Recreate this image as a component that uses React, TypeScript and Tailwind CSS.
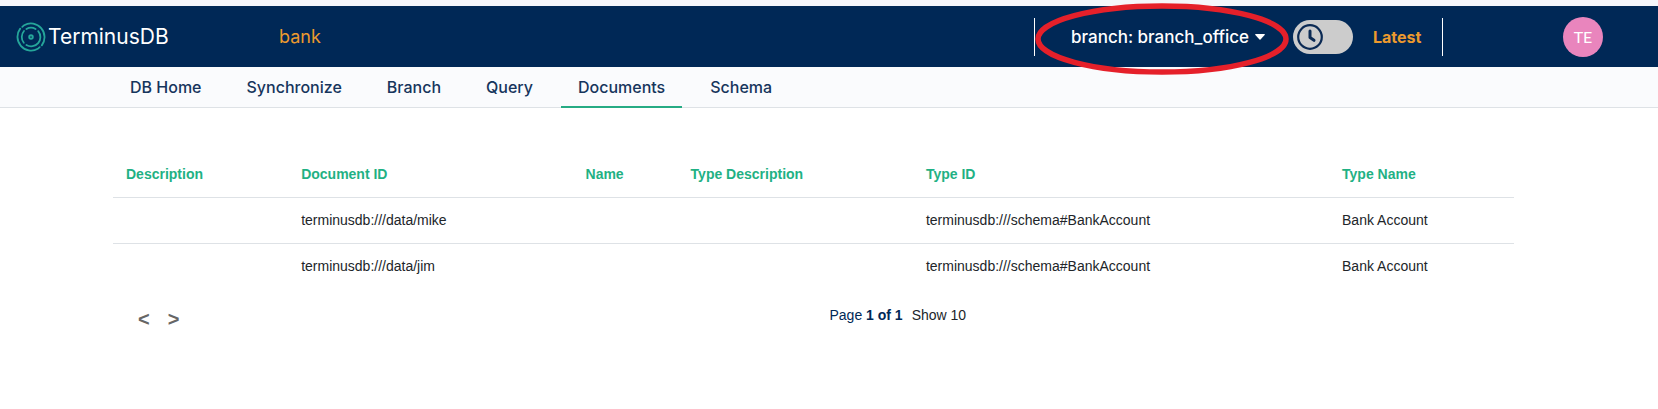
import React from "react";

const tabs = ["DB Home", "Synchronize", "Branch", "Query", "Documents", "Schema"];

const columns = [
  { label: "Description", width: "w-[12.5%]" },
  { label: "Document ID", width: "w-[20.3%]" },
  { label: "Name", width: "w-[7.5%]" },
  { label: "Type Description", width: "w-[16.8%]" },
  { label: "Type ID", width: "w-[29.7%]" },
  { label: "Type Name", width: "w-[13.2%]" },
];

const rows = [
  ["", "terminusdb:///data/mike", "", "", "terminusdb:///schema#BankAccount", "Bank Account"],
  ["", "terminusdb:///data/jim", "", "", "terminusdb:///schema#BankAccount", "Bank Account"],
];

function Logo() {
  return (
    <svg viewBox="0 0 30 30" className="size-[30px]" fill="none" stroke="#25a69a" strokeWidth="1.8" strokeLinecap="round" aria-hidden="true">
      <path d="M6.3 4.9L8.2 3.2A13.7 13.7 0 0 1 25.8 23.4" />
      <path d="M23.7 25.1L21.8 26.8A13.7 13.7 0 0 1 4.2 6.6" />
      <path d="M10.4 7A9.2 9.2 0 0 1 19.6 7" />
      <path d="M22.2 9.2A9.2 9.2 0 0 1 10.4 23" />
      <path d="M7.8 20.8A9.2 9.2 0 0 1 8 9" />
      <circle cx="15" cy="15" r="1.8" strokeWidth="1.9" />
    </svg>
  );
}

function Header() {
  return (
    <header className="flex h-[61px] items-center bg-[#002856] pl-4 font-['Inter',sans-serif]">
      <a href="#home" className="flex w-[263px] shrink-0 items-center gap-[2px] text-[21px] leading-6 text-white">
        <Logo />
        TerminusDB
      </a>
      <a href="#bank" className="text-lg text-[#ec9a2e]">bank</a>
      <div className="ml-auto flex shrink-0 items-center">
        <div className="flex h-[38px] items-center border-x border-white">
          <div className="relative ml-9 w-[222px]">
            <button type="button" className="flex items-center gap-[6px] text-[17px] leading-6 font-medium whitespace-nowrap text-white">
              branch: branch_office
              <svg viewBox="0 0 10 6" className="h-[6px] w-[10px]" fill="currentColor" aria-hidden="true">
                <path d="M0.5 0h9q.6.4.1 1L5.5 5.6q-.5.5-1 0L.4 1Q-.1.4.5 0z" />
              </svg>
            </button>
            <svg viewBox="0 0 254 72" className="pointer-events-none absolute -top-[22px] -left-9 h-[72px] w-[254px] max-w-none" fill="none" aria-hidden="true">
              <ellipse cx="127" cy="36" rx="124" ry="33" stroke="#e5202a" strokeWidth="5.5" />
            </svg>
          </div>
          <label className="relative flex h-[34px] w-[60px] cursor-pointer items-center rounded-full bg-[#cccccc] pl-1">
            <input type="checkbox" aria-label="Time travel" className="absolute inset-0 m-0 size-full cursor-pointer appearance-none rounded-full" />
            <svg viewBox="0 0 26 26" className="size-[26px]" fill="none" stroke="#0b2a54" aria-hidden="true">
              <circle cx="13" cy="13" r="11.8" strokeWidth="2.2" />
              <path d="M13 7v6.5l4 2.8" strokeWidth="3" strokeLinecap="round" strokeLinejoin="round" />
            </svg>
          </label>
          <span className="w-[89px] pl-5 text-base font-bold text-[#ec9a2e]">Latest</span>
        </div>
        <button type="button" className="mr-[55px] ml-[120px] size-10 rounded-full bg-[#e985bd] font-['Lato',sans-serif] text-base text-white">
          TE
        </button>
      </div>
    </header>
  );
}

function Navigation() {
  return (
    <nav className="flex h-[41px] gap-[11px] border-b border-[#dee2e6] bg-[#fafbfd] pl-[113px] font-['Inter',sans-serif]">
      {tabs.map((tab) => (
        <a
          key={tab}
          href={"#" + tab.toLowerCase().replace(" ", "-")}
          className={
            tab === "Documents"
              ? "-mb-px flex items-center border-b-2 border-[#26ab84] px-[17px] text-base font-medium text-[#16355c]"
              : "flex items-center px-[17px] text-base font-medium text-[#16355c]"
          }
        >
          {tab}
        </a>
      ))}
    </nav>
  );
}

export default function App() {
  return (
    <div className="min-h-screen bg-white pt-[6px] font-['Liberation_Sans',Arial,sans-serif] shadow-[inset_0_6px_0_#f5f6fb]">
      <Header />
      <Navigation />
      <main className="mr-36 ml-[113px] pt-[43px] text-sm text-[#212529]">
        <table className="w-full table-fixed border-collapse text-left">
          <thead>
            <tr>
              {columns.map((column) => (
                <th key={column.label} scope="col" className={column.width + " h-[46px] px-[13px] font-bold text-[#1fb184]"}>
                  {column.label}
                </th>
              ))}
            </tr>
          </thead>
          <tbody>
            {rows.map((row, r) => (
              <tr key={r} className="border-t border-[#dee2e6]">
                {row.map((cell, c) => (
                  <td key={c} className="h-[46px] px-[13px]">{cell}</td>
                ))}
              </tr>
            ))}
          </tbody>
        </table>
        <div className="grid grid-cols-2 pt-4">
          <div className="flex gap-[18px] pt-1 pl-[25px] text-xl leading-5 font-bold text-[#666666]">
            <button type="button" aria-label="Previous page">&lt;</button>
            <button type="button" aria-label="Next page">&gt;</button>
          </div>
          <div className="flex gap-[9px] pl-4 leading-5">
            <span className="text-[#002856]">
              Page <strong>1 of 1</strong>
            </span>
            <span>Show 10</span>
          </div>
        </div>
      </main>
    </div>
  );
}
